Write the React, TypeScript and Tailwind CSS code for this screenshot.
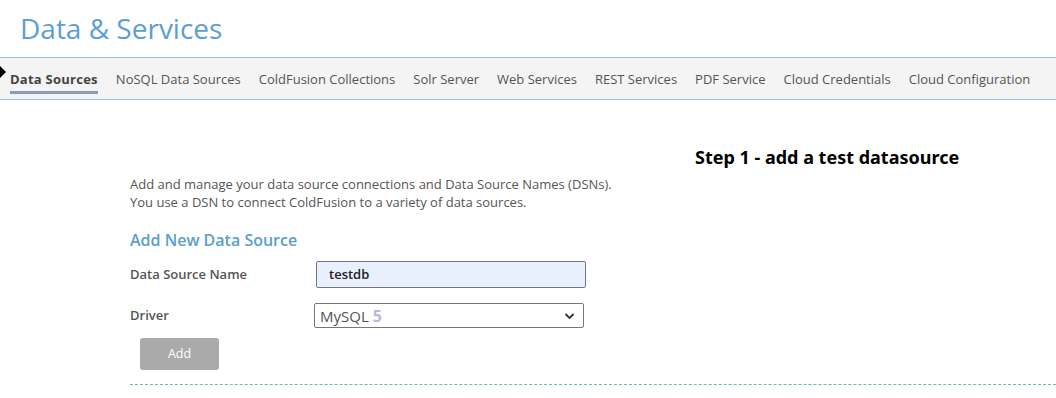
import React from "react";

const tabs = [
  "Data Sources",
  "NoSQL Data Sources",
  "ColdFusion Collections",
  "Solr Server",
  "Web Services",
  "REST Services",
  "PDF Service",
  "Cloud Credentials",
  "Cloud Configuration",
];

export default function App() {
  return (
    <div className="w-[1056px] h-[398px] bg-white overflow-hidden relative" style={{ fontFamily: '"Open Sans", sans-serif' }}>
      <div className="h-[57px] pl-[20px] pt-[9px]">
        <h1 className="text-[28px] leading-[38px] text-[#5b9ed6] font-normal">Data &amp; Services</h1>
      </div>
      <div className="relative h-[43px] bg-[#f4f4f4] border-y border-[#8ec8de] flex items-center pl-[10px] gap-[18px]">
        <div className="absolute left-0 top-[8px] w-0 h-0 border-y-[6px] border-y-transparent border-l-[6px] border-l-black" />
        {tabs.map((t, i) => (
          <div key={t} className={"relative text-[13px] leading-[20px] " + (i === 0 ? "text-[#444] font-bold tracking-[0.25px]" : "text-[#555]")}>
            {t}
            {i === 0 && <div className="absolute left-0 right-0 top-[22px] h-[3px] bg-[#8a9db3]" />}
          </div>
        ))}
      </div>
      <div className="pl-[695px] pt-[44px] h-[74px]">
        <div className="text-[18px] font-bold text-black leading-[26px]" style={{ fontFamily: '"Noto Sans", sans-serif' }}>Step 1 - add a test datasource</div>
      </div>
      <div className="pl-[130px]">
        <p className="mt-[2px] text-[13px] leading-[17.5px] text-[#555]">
          Add and manage your data source connections and Data Source Names (DSNs).
          <br />
          You use a DSN to connect ColdFusion to a variety of data sources.
        </p>
        <h2 className="mt-[18px] text-[16px] leading-[22px] font-semibold text-[#5b9ec9]">Add New Data Source</h2>
        <div className="mt-[10px] flex items-center h-[27px]">
          <div className="w-[186px] text-[13px] font-semibold text-[#555]">Data Source Name</div>
          <div className="w-[270px] h-[27px] bg-[#e8f0fe] border border-[#777] rounded-[2px] pl-[12px] flex items-center text-[13px] font-semibold text-[#222]">testdb</div>
        </div>
        <div className="mt-[15px] flex items-center h-[25px]">
          <div className="w-[184px] text-[13px] font-semibold text-[#555]">Driver</div>
          <div className="w-[270px] h-[25px] border border-[#777] rounded-[2px] pl-[5px] pr-[8px] flex items-center justify-between">
            <span className="text-[15px] text-[#555] leading-[20px]">MySQL <span className="font-bold text-[16px] text-[#b9b6dc]">5</span></span>
            <svg width="11" height="8" viewBox="0 0 11 8"><path d="M1.5 2 L5.5 6 L9.5 2" stroke="#333" strokeWidth="1.8" fill="none" /></svg>
          </div>
        </div>
        <div className="mt-[10px] ml-[10px] w-[79px] h-[32px] bg-[#aaaaaa] rounded-[3px] flex items-center justify-center text-white text-[12.5px]">Add</div>
        <div className="mt-[14px] border-t border-dashed border-[#5cc3b3]" />
      </div>
    </div>
  );
}
